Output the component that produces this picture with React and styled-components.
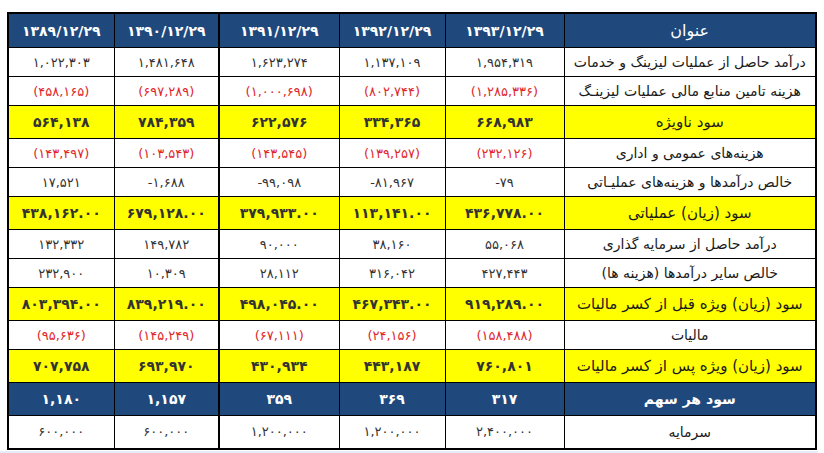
import styled, { createGlobalStyle } from "styled-components";

const GlobalStyle = createGlobalStyle`
  html, body {
    margin: 0;
    background: #ffffff;
  }
`;

const HEADERS = ["۱۳۹۳/۱۲/۲۹", "۱۳۹۲/۱۲/۲۹", "۱۳۹۱/۱۲/۲۹", "۱۳۹۰/۱۲/۲۹", "۱۳۸۹/۱۲/۲۹"];

// kind: plain | red | yellow | blue
const ROWS = [
  { title: "درآمد حاصل از عملیات لیزینگ و خدمات", kind: "plain", values: ["۱,۹۵۴,۳۱۹", "۱,۱۳۷,۱۰۹", "۱,۶۲۳,۲۷۴", "۱,۴۸۱,۶۴۸", "۱,۰۲۲,۳۰۳"] },
  { title: "هزینه تامین منابع مالی عملیات لیزینـگ", kind: "red", values: ["(۱,۲۸۵,۳۳۶)", "(۸۰۲,۷۴۴)", "(۱,۰۰۰,۶۹۸)", "(۶۹۷,۲۸۹)", "(۴۵۸,۱۶۵)"] },
  { title: "سود ناویژه", kind: "yellow", values: ["۶۶۸,۹۸۳", "۳۳۴,۳۶۵", "۶۲۲,۵۷۶", "۷۸۴,۳۵۹", "۵۶۴,۱۳۸"] },
  { title: "هزینه‌های عمومی و اداری", kind: "red", values: ["(۲۳۲,۱۲۶)", "(۱۳۹,۲۵۷)", "(۱۴۳,۵۴۵)", "(۱۰۳,۵۴۳)", "(۱۴۳,۴۹۷)"] },
  { title: "خالص درآمدها و هزینه‌های عملیـاتی", kind: "plain", values: ["-۷۹", "-۸۱,۹۶۷", "-۹۹,۰۹۸", "-۱,۶۸۸", "۱۷,۵۲۱"] },
  { title: "سود (زیان) عملیاتی", kind: "yellow", values: ["۴۳۶,۷۷۸.۰۰", "۱۱۳,۱۴۱.۰۰", "۳۷۹,۹۳۳.۰۰", "۶۷۹,۱۲۸.۰۰", "۴۳۸,۱۶۲.۰۰"] },
  { title: "درآمد حاصل از سرمایه گذاری", kind: "plain", values: ["۵۵,۰۶۸", "۳۸,۱۶۰", "۹۰,۰۰۰", "۱۴۹,۷۸۲", "۱۳۲,۳۳۲"] },
  { title: "خالص سایر درآمدها (هزینه ها)", kind: "plain", values: ["۴۲۷,۴۴۳", "۳۱۶,۰۴۲", "۲۸,۱۱۲", "۱۰,۳۰۹", "۲۳۲,۹۰۰"] },
  { title: "سود (زیان) ویژه قبل از کسر مالیات", kind: "yellow", values: ["۹۱۹,۲۸۹.۰۰", "۴۶۷,۳۴۳.۰۰", "۴۹۸,۰۴۵.۰۰", "۸۳۹,۲۱۹.۰۰", "۸۰۳,۳۹۴.۰۰"] },
  { title: "مالیات", kind: "red", values: ["(۱۵۸,۴۸۸)", "(۲۴,۱۵۶)", "(۶۷,۱۱۱)", "(۱۴۵,۲۴۹)", "(۹۵,۶۳۶)"] },
  { title: "سود (زیان) ویژه پس از کسر مالیات", kind: "yellow", values: ["۷۶۰,۸۰۱", "۴۴۳,۱۸۷", "۴۳۰,۹۳۴", "۶۹۳,۹۷۰", "۷۰۷,۷۵۸"] },
  { title: "سود هر سهم", kind: "blue", values: ["۳۱۷", "۳۶۹", "۳۵۹", "۱,۱۵۷", "۱,۱۸۰"] },
  { title: "سرمایه", kind: "plain", tall: true, values: ["۲,۴۰۰,۰۰۰", "۱,۲۰۰,۰۰۰", "۱,۲۰۰,۰۰۰", "۶۰۰,۰۰۰", "۶۰۰,۰۰۰"] },
];

const COL_WIDTHS = [252, 119, 106, 120, 105, 106];

const Page = styled.div`
  padding: 12px 0 0 7px;
  font-family: "DejaVu Sans", "Noto Sans", sans-serif;
`;

const Table = styled.table`
  direction: rtl;
  width: 808px;
  table-layout: fixed;
  border-collapse: collapse;
  border: 2px solid #000;
`;

const bgFor = (kind) =>
  kind === "yellow" ? "#ffff00" : kind === "blue" ? "#1f497d" : "#ffffff";

const Row = styled.tr`
  background: ${(p) => bgFor(p.$kind)};
  height: ${(p) => (p.$kind === "plain" || p.$kind === "red" ? (p.$tall ? 33 : 29) : 33)}px;
`;

const HeadCell = styled.th`
  height: 33px;
  padding: 0;
  background: #1f497d;
  color: #ffffff;
  font-size: ${(p) => (p.$title ? 16 : 14)}px;
  font-weight: ${(p) => (p.$title ? 400 : 700)};
  text-align: center;
  border: 1px solid #000;
  border-left-width: ${(p) => (p.$thick ? 2 : 1)}px;
  direction: ${(p) => (p.$title ? "rtl" : "ltr")};
`;

const TitleCell = styled.td`
  padding: 0 4px;
  text-align: center;
  border: 1px solid #000;
  color: ${(p) => (p.$kind === "blue" ? "#ffffff" : "#1a1a1a")};
  font-size: ${(p) => (p.$kind === "yellow" ? 15 : 14)}px;
  font-weight: ${(p) => (p.$kind === "blue" ? 700 : 400)};
  white-space: nowrap;
  overflow: hidden;
`;

const NumCell = styled.td`
  padding: 0;
  text-align: center;
  direction: ltr;
  border: 1px solid #000;
  border-left-width: ${(p) => (p.$thick ? 2 : 1)}px;
  font-size: ${(p) => (p.$kind === "yellow" || p.$kind === "blue" ? 14 : 13)}px;
  font-weight: ${(p) => (p.$kind === "yellow" || p.$kind === "blue" ? 700 : 400)};
  color: ${(p) =>
    p.$kind === "red" ? "#e0282c" : p.$kind === "blue" ? "#ffffff" : "#333333"};
`;

const Strip = styled.div`
  margin: 1px 0 0 -7px;
  width: 818px;
  height: 7px;
  background: #e3ecf8;
`;

export default function App() {
  return (
    <>
      <GlobalStyle />
      <Page>
        <Table>
          <colgroup>
            {COL_WIDTHS.map((w, i) => (
              <col key={i} style={{ width: w }} />
            ))}
          </colgroup>
          <thead>
            <tr>
              <HeadCell $title>عنوان</HeadCell>
              {HEADERS.map((h, i) => (
                <HeadCell key={h} $thick={i === 2}>
                  {h}
                </HeadCell>
              ))}
            </tr>
          </thead>
          <tbody>
            {ROWS.map((r) => (
              <Row key={r.title} $kind={r.kind} $tall={r.tall}>
                <TitleCell $kind={r.kind}>{r.title}</TitleCell>
                {r.values.map((v, i) => (
                  <NumCell key={i} $kind={r.kind} $thick={i === 2}>
                    {v}
                  </NumCell>
                ))}
              </Row>
            ))}
          </tbody>
        </Table>
        <Strip />
      </Page>
    </>
  );
}
